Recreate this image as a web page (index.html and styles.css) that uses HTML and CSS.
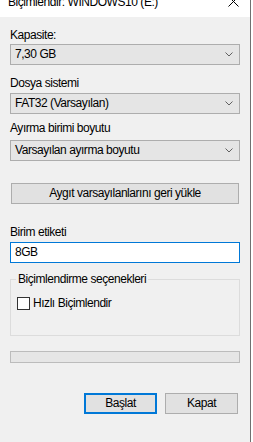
FILE: index.html
```html
<!DOCTYPE html>
<html lang="tr">
<head>
    <meta charset="UTF-8">
    <title>Biçimlendir: WINDOWS10 (E:)</title>
    <link rel="stylesheet" href="styles.css">
</head>
<body>
    <div class="screen">
        <div class="dialog">
            <div class="titlebar">
                <span class="title">Biçimlendir: WINDOWS10 (E:)</span>
                <svg class="close" width="11" height="11" viewBox="0 0 11 11">
                    <path d="M0.5 0.5 L10.5 10.5 M10.5 0.5 L0.5 10.5" stroke="#000" stroke-width="1" fill="none"/>
                </svg>
            </div>

            <div class="content">
                <div class="field-label cap">Kapasite:</div>
                <div class="combo">
                    <span>7,30 GB</span>
                    <svg class="chevron" width="8" height="5" viewBox="0 0 8 5"><path d="M0.5 0.5 L4 4 L7.5 0.5" stroke="#606060" fill="none"/></svg>
                </div>

                <div class="field-label fs">Dosya sistemi</div>
                <div class="combo">
                    <span>FAT32 (Varsayılan)</span>
                    <svg class="chevron" width="8" height="5" viewBox="0 0 8 5"><path d="M0.5 0.5 L4 4 L7.5 0.5" stroke="#606060" fill="none"/></svg>
                </div>

                <div class="field-label al">Ayırma birimi boyutu</div>
                <div class="combo">
                    <span>Varsayılan ayırma boyutu</span>
                    <svg class="chevron" width="8" height="5" viewBox="0 0 8 5"><path d="M0.5 0.5 L4 4 L7.5 0.5" stroke="#606060" fill="none"/></svg>
                </div>

                <button class="btn restore">Aygıt varsayılanlarını geri yükle</button>

                <div class="field-label vol">Birim etiketi</div>
                <div class="textbox">8GB</div>

                <fieldset class="group">
                    <legend>Biçimlendirme seçenekleri</legend>
                    <div class="check">
                        <span class="box"></span>
                        <span>Hızlı Biçimlendir</span>
                    </div>
                </fieldset>

                <div class="progress"></div>

                <div class="actions">
                    <button class="btn primary">Başlat</button>
                    <button class="btn">Kapat</button>
                </div>
            </div>
        </div>
        <div class="backdrop"></div>
    </div>
</body>
</html>
```

FILE: styles.css
```css
* {
    margin: 0;
    padding: 0;
    box-sizing: border-box;
}

body {
    background: #fff;
    color: #000;
    font-family: 'Liberation Sans', Arial, sans-serif;
    font-size: 12px;
    line-height: 15px;
    letter-spacing: -0.45px;
    width: 253px;
    height: 442px;
    overflow: hidden;
}

.screen {
    display: flex;
    height: 442px;
}

/* Dialog window */
.dialog {
    width: 251px;
    flex-shrink: 0;
    background: #f0f0f0;
    border-right: 1px solid #707070;
    display: flex;
    flex-direction: column;
}

.backdrop {
    flex: 1;
    background: #fff;
}

.titlebar {
    height: 17px;
    background: #fff;
    overflow: hidden;
    display: flex;
    align-items: flex-start;
    justify-content: space-between;
    padding: 0 11px 0 8px;
}

.title {
    margin-top: -5px;
    white-space: nowrap;
}

.close {
    margin-top: -4px;
}

.content {
    padding: 0 10px;
    display: flex;
    flex-direction: column;
}

/* Labels */
.field-label {
    height: 15px;
    white-space: nowrap;
}

.field-label.cap { margin: 11px 0 1px; }
.field-label.fs { margin: 11px 0 2px; }
.field-label.al { margin: 7px 0 4px; }
.field-label.vol { margin: 21px 0 2px; }

/* Combo boxes */
.combo {
    height: 21px;
    background: #e5e5e5;
    border: 1px solid #adadad;
    display: flex;
    align-items: center;
    justify-content: space-between;
    padding: 0 6px 0 4px;
}

/* Buttons */
.btn {
    font: inherit;
    letter-spacing: inherit;
    color: #000;
    height: 21px;
    background: #e1e1e1;
    border: 1px solid #adadad;
    line-height: 17px;
}

.btn.restore {
    margin: 22px 1px 0;
}

.btn.primary {
    border: 2px solid #0078d7;
}

/* Text box */
.textbox {
    height: 21px;
    background: #fff;
    border: 1px solid #0078d7;
    padding: 2px 4px 0;
}

/* Group box */
.group {
    margin-top: 9px;
    height: 64px;
    border: 1px solid #dcdcdc;
    padding: 0 5px;
}

.group legend {
    padding: 0 2px;
    line-height: 15px;
}

.check {
    display: flex;
    align-items: center;
    gap: 3px;
    margin: 9px 0 0 1px;
}

.box {
    width: 13px;
    height: 13px;
    background: #fff;
    border: 1px solid #333;
}

/* Progress bar */
.progress {
    margin-top: 15px;
    height: 12px;
    background: #e6e6e6;
    border: 1px solid #bcbcbc;
}

.actions {
    margin-top: 30px;
    display: flex;
    justify-content: flex-end;
    gap: 8px;
    padding-right: 2px;
}

.actions .btn {
    width: 73px;
}
```
